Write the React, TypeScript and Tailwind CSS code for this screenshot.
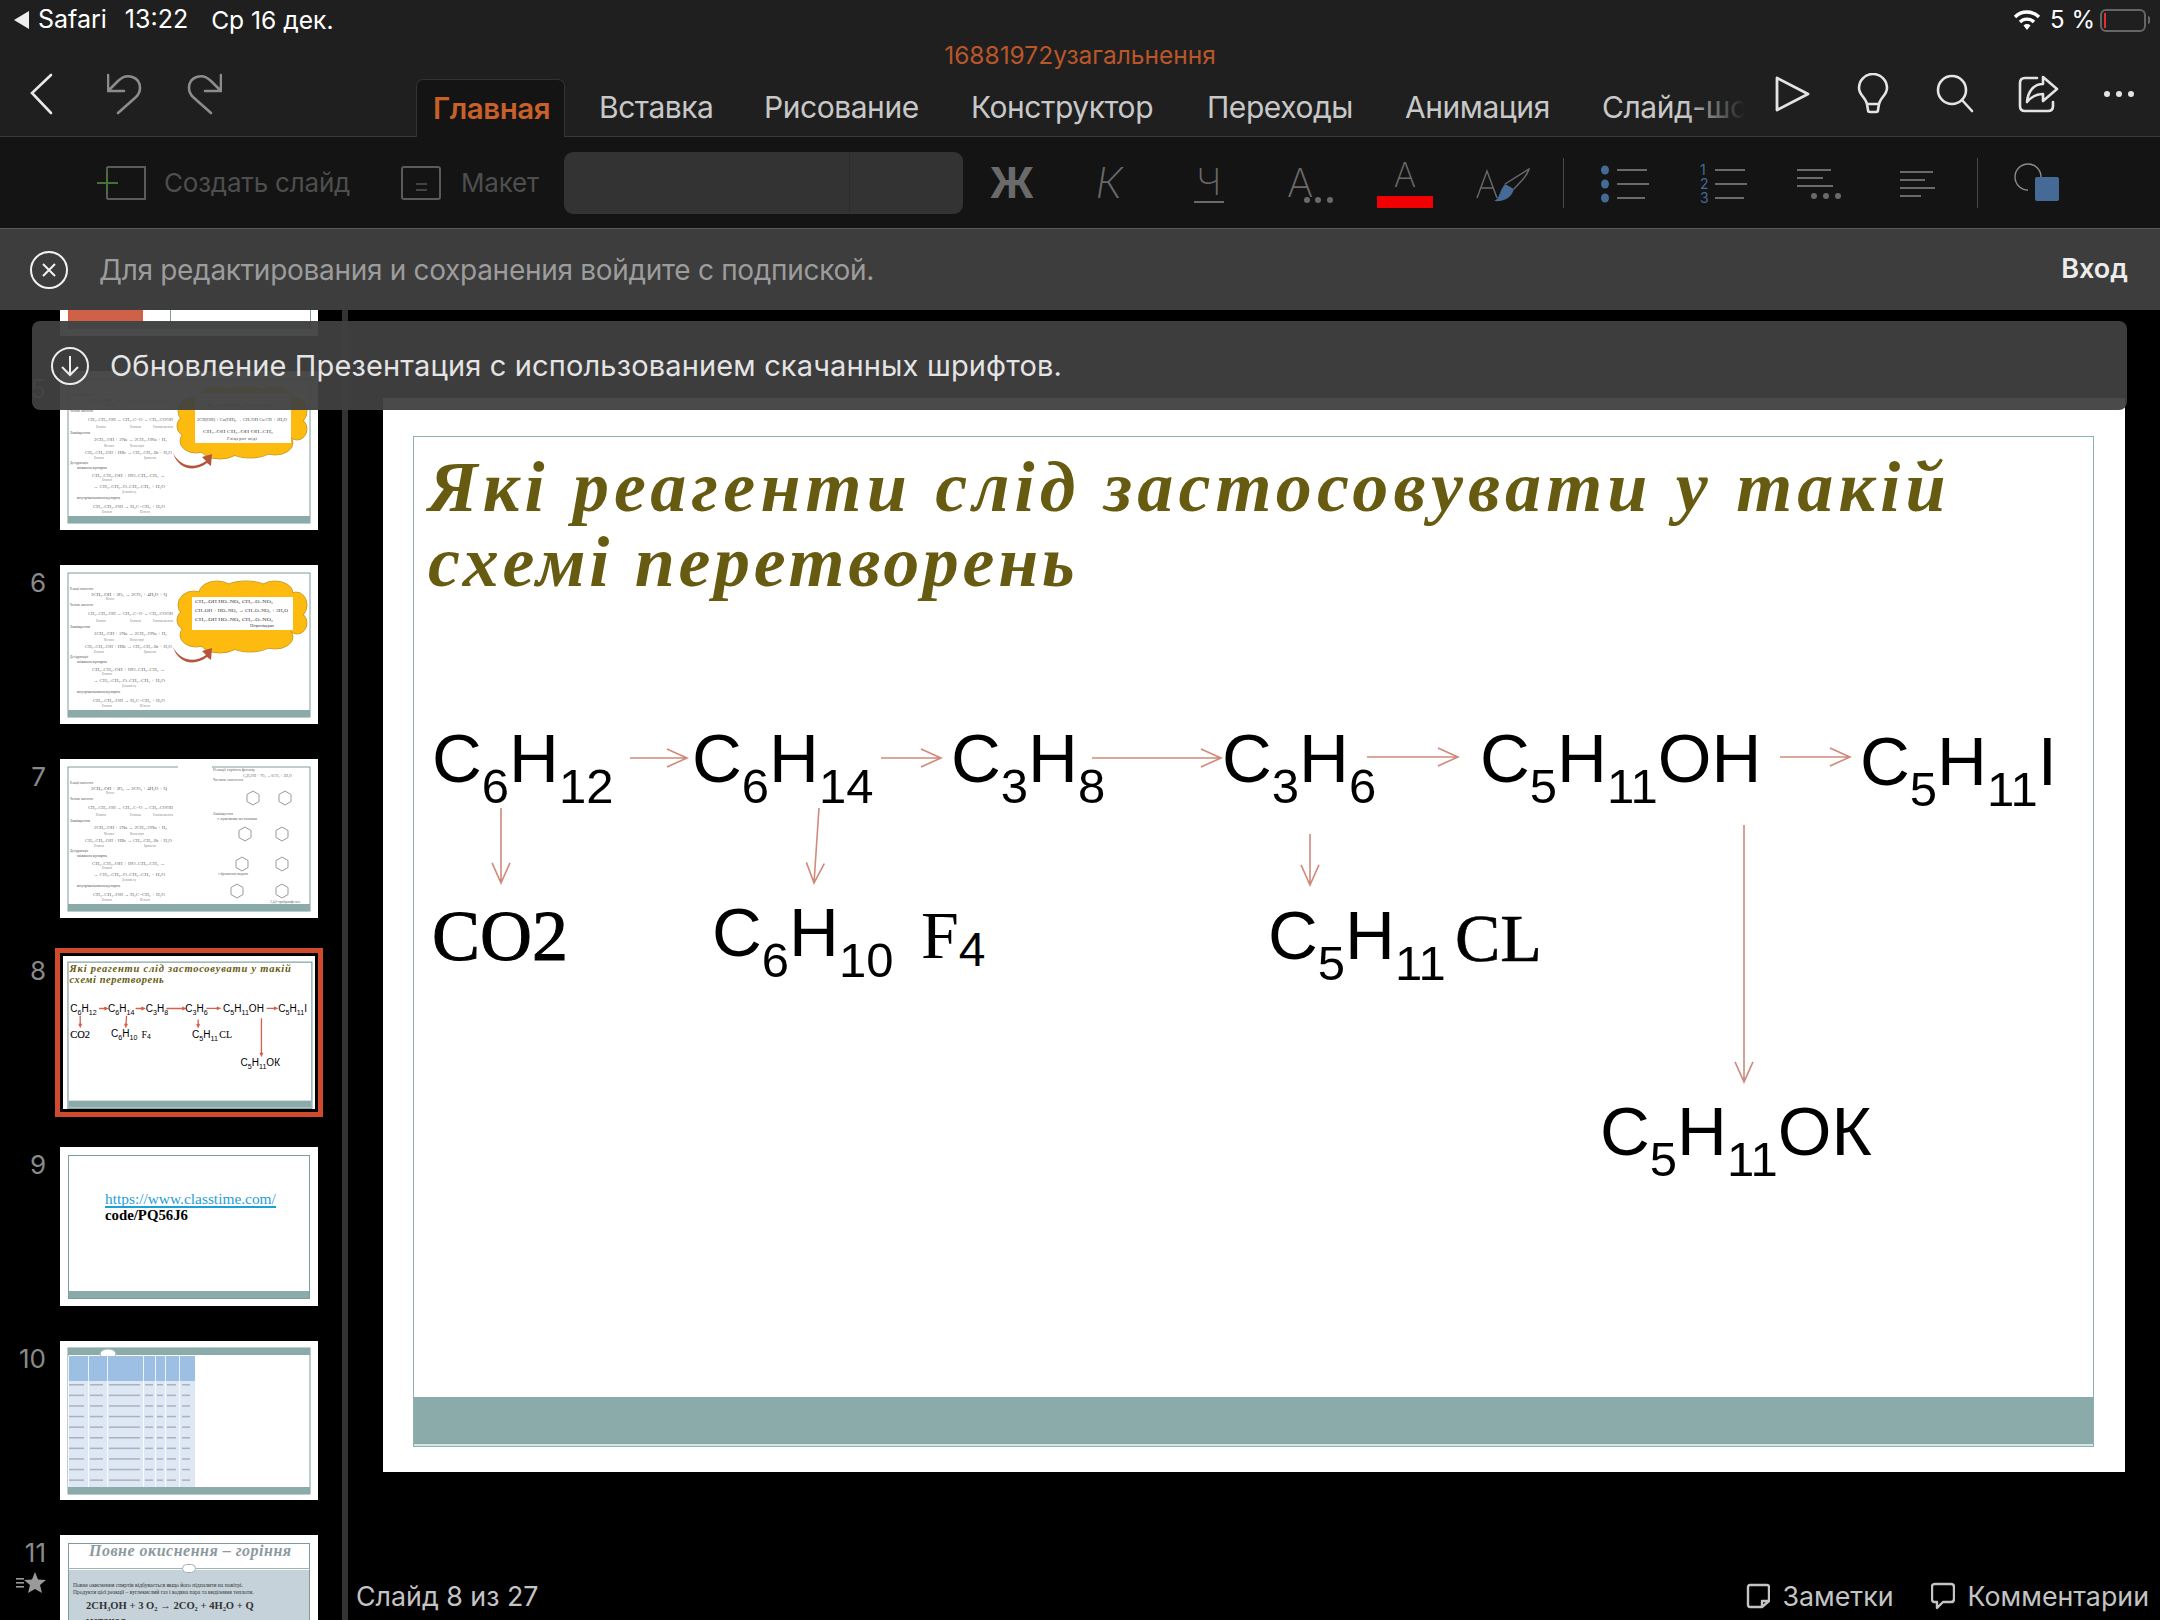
import type { ReactNode } from 'react'

const Sub = ({ children }: { children: ReactNode }) => (
  <span className="relative top-[21px] text-[49px]">{children}</span>
)

const Arrow = ({ x1, y1, x2, y2 }: { x1: number; y1: number; x2: number; y2: number }) => {
  const a = Math.atan2(y2 - y1, x2 - x1)
  const head = (d: number) => `${x2 - 22 * Math.cos(a + d)},${y2 - 22 * Math.sin(a + d)}`
  return <polyline points={`${x1},${y1} ${x2},${y2} ${head(0.42)} ${x2},${y2} ${head(-0.42)}`} />
}

const Slide8 = ({ thumb = false }: { thumb?: boolean }) => (
  <div className="relative h-[1074px] w-[1742px] bg-white text-black [font-family:'Liberation_Sans',sans-serif]">
    <div
      className={
        thumb
          ? 'absolute left-[30px] top-[38px] flex h-[1011px] w-[1681px] flex-col justify-end border-[8px] border-[#7f9c9c]'
          : 'absolute left-[30px] top-[38px] flex h-[1011px] w-[1681px] flex-col justify-end border border-[#8fb0b0]'
      }
    >
      <div className="h-[49px] border-b-2 border-[#d5e4e4] bg-[#8babaa]" />
    </div>

    <div className="absolute left-[45px] top-[52px] w-[1600px] text-[72px] leading-[75px] font-bold italic text-[#665b10] [font-family:'Liberation_Serif',serif]">
      <div className="whitespace-nowrap tracking-[5.2px]">Які реагенти слід застосовувати у такій</div>
      <div className="whitespace-nowrap tracking-[3.7px]">схемі перетворень</div>
    </div>

    <svg
      className={thumb ? 'absolute inset-0 text-[#d9604c]' : 'absolute inset-0 text-[#cf8a7c]'}
      width="1742"
      height="1074"
      viewBox="0 0 1742 1074"
      fill="none"
      stroke="currentColor"
      strokeWidth={thumb ? 9 : 1.6}
    >
      <Arrow x1={247} y1={360} x2={304} y2={360} />
      <Arrow x1={498} y1={360} x2={558} y2={360} />
      <Arrow x1={709} y1={360} x2={838} y2={360} />
      <Arrow x1={984} y1={359} x2={1075} y2={359} />
      <Arrow x1={1397} y1={359} x2={1467} y2={359} />
      <Arrow x1={118} y1={410} x2={118} y2={485} />
      <Arrow x1={436} y1={410} x2={431} y2={485} />
      <Arrow x1={927} y1={436} x2={927} y2={487} />
      <Arrow x1={1361} y1={427} x2={1361} y2={684} />
    </svg>

    <div className="absolute left-[49px] top-[321px] whitespace-nowrap text-[69px] leading-[80px]">C<Sub>6</Sub>H<Sub>12</Sub></div>
    <div className="absolute left-[309px] top-[321px] whitespace-nowrap text-[69px] leading-[80px]">C<Sub>6</Sub>H<Sub>14</Sub></div>
    <div className="absolute left-[568px] top-[321px] whitespace-nowrap text-[69px] leading-[80px]">C<Sub>3</Sub>H<Sub>8</Sub></div>
    <div className="absolute left-[839px] top-[321px] whitespace-nowrap text-[69px] leading-[80px]">C<Sub>3</Sub>H<Sub>6</Sub></div>
    <div className="absolute left-[1097px] top-[321px] whitespace-nowrap text-[69px] leading-[80px]">C<Sub>5</Sub>H<Sub>11</Sub>OH</div>
    <div className="absolute left-[1477px] top-[324px] whitespace-nowrap text-[69px] leading-[80px]">C<Sub>5</Sub>H<Sub>11</Sub>I</div>

    <div className="absolute left-[49px] top-[498px] whitespace-nowrap text-[72px] leading-[80px] [-webkit-text-stroke:1px_#000] [font-family:'Liberation_Serif',serif]">CO2</div>
    <div className="absolute left-[329px] top-[495px] whitespace-nowrap text-[69px] leading-[80px]">C<Sub>6</Sub>H<Sub>10</Sub></div>
    <div className="absolute left-[538px] top-[497px] whitespace-nowrap text-[68px] leading-[80px] [font-family:'Liberation_Serif',serif]">
      F<span className="relative top-[8px] text-[48px] [font-family:'Liberation_Sans',sans-serif]">4</span>
    </div>
    <div className="absolute left-[885px] top-[498px] whitespace-nowrap text-[69px] leading-[80px]">C<Sub>5</Sub>H<Sub>11</Sub></div>
    <div className="absolute left-[1072px] top-[500px] whitespace-nowrap text-[68px] leading-[80px] [-webkit-text-stroke:0.6px_#000] [font-family:'Liberation_Serif',serif]">CL</div>
    <div className="absolute left-[1217px] top-[694px] whitespace-nowrap text-[69px] leading-[80px]">C<Sub>5</Sub>H<Sub>11</Sub>ОК</div>
  </div>
)

// x, y, width, colour, text of the small formula lines on thumbnails 5-7
const formulaRows: [number, number, number, string, string][] = [
  [10, 25, 23, '#555', 'Реакції окиснення'],
  [31, 31, 76, '#555', '2CH₃–OH + 3O₂ → 2CO₂ + 4H₂O + Q'],
  [46, 35, 8, '#888', 'Метанол'],
  [10, 41, 23, '#555', 'Часткове окиснення'],
  [28, 50, 85, '#666', 'CH₃–CH₂–OH → CH₃–C=O → CH₃–COOH'],
  [36, 57, 10, '#888', 'Етанол'],
  [70, 57, 11, '#888', 'Етаналь'],
  [93, 57, 20, '#888', 'Етанова кислота'],
  [10, 63, 20, '#555', 'Заміщення'],
  [34, 70, 73, '#666', '2CH₃–OH + 2Na → 2CH₃–ONa + H₂'],
  [44, 76, 10, '#888', 'Метанол'],
  [70, 76, 14, '#888', 'Метилат натрію'],
  [25, 83, 87, '#666', 'CH₃–CH₂–OH + HBr → CH₃–CH₂–Br + H₂O'],
  [34, 88, 10, '#888', 'Етанол'],
  [84, 88, 12, '#888', 'Бромоетан'],
  [10, 93, 18, '#555', 'Дегідратація'],
  [17, 98, 30, '#555', 'міжмолекулярна'],
  [32, 106, 73, '#666', 'CH₃–CH₂–OH + HO–CH₂–CH₃ →'],
  [42, 110, 10, '#888', 'Етанол'],
  [33, 117, 72, '#666', '→ CH₃–CH₂–O–CH₂–CH₃ + H₂O'],
  [62, 122, 14, '#888', 'Діетиловий етер'],
  [17, 128, 43, '#555', 'внутрішньомолекулярна'],
  [33, 137, 72, '#666', 'CH₃–CH₂–OH → H₂C=CH₂ + H₂O'],
  [42, 142, 10, '#888', 'Етанол'],
  [80, 142, 10, '#888', 'Етен'],
]

const FormulaRows = () => (
  <g fontSize="4" fontFamily="'Liberation Serif', serif">
    <rect x="8" y="8" width="242" height="144" fill="none" stroke="#7f9c9c" strokeWidth="1" />
    <rect x="8" y="145" width="242" height="7" fill="#8babaa" />
    {formulaRows.map(([x, y, w, c, t], i) => (
      <text key={i} x={x} y={y} textLength={w} lengthAdjust="spacingAndGlyphs" fill={c}>
        {t}
      </text>
    ))}
  </g>
)

const bumps = [
  [134, 40, 16, 14], [126, 55, 9, 10], [136, 70, 16, 12], [160, 77, 20, 11], [190, 78, 22, 9],
  [215, 72, 18, 12], [237, 58, 10, 11], [236, 40, 11, 13], [215, 28, 18, 12], [186, 24, 22, 8], [157, 28, 18, 12],
]

const Cloud = () => (
  <g>
    <g fill="#fdbb0f" stroke="#b98a1a" strokeWidth="0.8">
      {bumps.map(([cx, cy, rx, ry], i) => (
        <ellipse key={i} cx={cx} cy={cy} rx={rx} ry={ry} />
      ))}
    </g>
    <g fill="#fdbb0f">
      <ellipse cx="182" cy="52" rx="56" ry="28" />
      {bumps.map(([cx, cy, rx, ry], i) => (
        <ellipse key={i} cx={cx} cy={cy} rx={rx - 0.6} ry={ry - 0.6} />
      ))}
    </g>
    <path d="M113 82 C120 96 135 98 146 90 L142 86 L152 83 L151 95 L147 92 C134 102 118 98 113 82 Z" fill="#b5553c" />
  </g>
)

const Thumb56 = ({ five = false }: { five?: boolean }) => (
  <svg width="258" height="159" viewBox="0 0 258 159">
    <FormulaRows />
    <Cloud />
    {five ? (
      <g fontSize="4.5" fill="#444" fontFamily="'Liberation Serif', serif">
        <rect x="135" y="22" width="96" height="50" fill="#fff" />
        <text x="143" y="36" textLength="70" lengthAdjust="spacingAndGlyphs">CH₂–OH    CH₂–O   O–CH₂</text>
        <text x="137" y="50" textLength="90" lengthAdjust="spacingAndGlyphs">2CH(OH) + Cu(OH)₂ → CH–OH  Cu  CH + 2H₂O</text>
        <text x="143" y="62" textLength="70" lengthAdjust="spacingAndGlyphs">CH₂–OH    CH₂–OH  OH–CH₂</text>
        <text x="167" y="69" textLength="30">Гліцерат міді</text>
      </g>
    ) : (
      <g fontSize="5" fill="#333" fontFamily="'Liberation Serif', serif">
        <rect x="132" y="32" width="101" height="33" fill="#fff" />
        <text x="135" y="38" textLength="78" lengthAdjust="spacingAndGlyphs">CH₂–OH  HO–NO₂  CH₂–O–NO₂</text>
        <text x="135" y="47" textLength="93" lengthAdjust="spacingAndGlyphs">CH–OH + HO–NO₂ → CH–O–NO₂ + 3H₂O</text>
        <text x="135" y="56" textLength="78" lengthAdjust="spacingAndGlyphs">CH₂–OH  HO–NO₂  CH₂–O–NO₂</text>
        <text x="190" y="62" textLength="24" fontSize="4">Нітрогліцерин</text>
      </g>
    )}
  </svg>
)

const ring = [
  [193, 39], [225, 39], [185, 75], [222, 75], [182, 105], [222, 105], [177, 132], [222, 132],
]

const Thumb7 = () => (
  <svg width="258" height="159" viewBox="0 0 258 159">
    <FormulaRows />
    <rect x="118" y="7" width="34" height="2" fill="#fff" />
    <g fontSize="4" fill="#666" fontFamily="'Liberation Serif', serif">
      <text x="153" y="12" textLength="42" lengthAdjust="spacingAndGlyphs">Реакції горіння фенолу</text>
      <text x="183" y="18" textLength="49" lengthAdjust="spacingAndGlyphs">C₆H₅OH + 7O₂ → 6CO₂ + 3H₂O</text>
      <text x="153" y="22" textLength="30" lengthAdjust="spacingAndGlyphs">Часткове окиснення</text>
      <text x="153" y="56" textLength="20" lengthAdjust="spacingAndGlyphs">Заміщення</text>
      <text x="157" y="61" textLength="40" lengthAdjust="spacingAndGlyphs">з лужними металами</text>
      <text x="158" y="116" textLength="30" lengthAdjust="spacingAndGlyphs">з бромною водою</text>
      <text x="210" y="144" textLength="30" lengthAdjust="spacingAndGlyphs">2,4,6-трибромфенол</text>
    </g>
    {ring.map(([x, y], i) => (
      <polygon
        key={i}
        points={`${x},${y - 7} ${x + 6},${y - 3.5} ${x + 6},${y + 3.5} ${x},${y + 7} ${x - 6},${y + 3.5} ${x - 6},${y - 3.5}`}
        fill="none"
        stroke="#999"
        strokeWidth="1"
      />
    ))}
  </svg>
)

const Thumb4 = () => (
  <svg width="258" height="159" viewBox="0 0 258 159">
    <rect x="8" y="110" width="75" height="35" fill="#cf6148" />
    <rect x="110" y="0" width="1" height="152" fill="#7f9c9c" />
    <rect x="250" y="0" width="1" height="152" fill="#7f9c9c" />
    <rect x="8" y="145" width="242" height="7" fill="#8babaa" />
    <rect x="180" y="126" width="50" height="1.5" fill="#aaa" />
  </svg>
)

const Thumb9 = () => (
  <div className="relative h-full w-full [font-family:'Liberation_Serif',serif]">
    <div className="absolute left-[8px] top-[8px] flex h-[144px] w-[242px] flex-col justify-end border border-[#7f9c9c]">
      <div className="h-[7px] bg-[#8babaa]" />
    </div>
    <div className="absolute left-[45px] top-[44px] text-[15.4px] leading-[15px] text-black">
      <div className="w-fit border-b-2 border-[#1da0d8] text-[#1da0d8]">https://www.classtime.com/</div>
      <div className="text-[14.8px] font-bold">code/PQ56J6</div>
    </div>
  </div>
)

const tableCols = [8, 28, 47, 83, 95, 105, 119, 135]
const Thumb10 = () => (
  <svg width="258" height="159" viewBox="0 0 258 159">
    <rect x="8" y="7" width="242" height="146" fill="none" stroke="#7f9c9c" />
    <rect x="8" y="7" width="242" height="7" fill="#8babaa" />
    <rect x="8" y="146" width="242" height="7" fill="#8babaa" />
    <ellipse cx="48" cy="13" rx="8" ry="5" fill="#fff" stroke="#9fb8b8" />
    <rect x="8" y="15" width="127" height="25" fill="#9dbfe3" />
    <rect x="8" y="40" width="127" height="106" fill="#dde8f4" />
    {tableCols.map((x) => (
      <rect key={x} x={x} y="15" width="0.8" height="131" fill="#fff" />
    ))}
    {Array.from({ length: 10 }, (_, i) => (
      <g key={i} fill="#aab2bd">
        <rect x="9" y={43 + i * 10.6} width="15" height="1.5" />
        <rect x="30" y={43 + i * 10.6} width="13" height="1.5" />
        <rect x="49" y={43 + i * 10.6} width="31" height="1.5" />
        <rect x="85" y={43 + i * 10.6} width="8" height="1.5" />
        <rect x="97" y={43 + i * 10.6} width="6" height="1.5" />
        <rect x="107" y={43 + i * 10.6} width="9" height="1.5" />
        <rect x="122" y={43 + i * 10.6} width="8" height="1.5" />
      </g>
    ))}
  </svg>
)

const Thumb11 = () => (
  <div className="relative h-full w-full [font-family:'Liberation_Serif',serif]">
    <div className="absolute left-[8px] top-[8px] h-[144px] w-[242px] border border-[#7f9c9c]" />
    <div className="absolute left-[9px] top-[35px] h-[116px] w-[240px] bg-[#c5d2da]" />
    <div className="absolute left-[8px] top-[33px] h-px w-[242px] bg-[#9fb3b3]" />
    <div className="absolute left-[122px] top-[29px] h-[9px] w-[14px] rounded-full border border-[#9fb3b3] bg-white" />
    <div className="absolute left-[29px] top-[6px] whitespace-nowrap text-[16px] leading-[20px] font-bold italic tracking-[0.5px] text-[#8b9aa0]">
      Повне окиснення – горіння
    </div>
    <div className="absolute left-[13px] top-[47px] whitespace-nowrap text-[5.6px] leading-[6.5px] text-[#333]">
      <div>Повне окиснення спиртів відбувається якщо його підпалити на повітрі.</div>
      <div>Продукти цієї реакції – вуглекислий газ і водяна пара та виділення теплоти.</div>
    </div>
    <div className="absolute left-[26px] top-[63px] whitespace-nowrap text-[10.6px] leading-[15px] font-bold text-[#333]">
      <div>2CH₃OH + 3 O₂ → 2CO₂ + 4H₂O + Q</div>
      <div>метанол</div>
    </div>
  </div>
)

const ThumbRow = ({
  n,
  selected = false,
  star = false,
  children,
}: {
  n?: number
  selected?: boolean
  star?: boolean
  children: ReactNode
}) => (
  <div className="flex gap-[14px]">
    <div className="flex w-[46px] flex-col items-end text-[26px] leading-[36px] text-[#8a8a8a]">
      <span>{n}</span>
      {star && (
        <svg className="mt-[1px]" width="30" height="22" viewBox="0 0 30 22" fill="#999">
          <polygon points="19,0 22,7.5 30,8 24,13 26,21 19,17 12,21 14,13 8,8 16,7.5" />
          <rect x="0" y="6" width="8" height="1.6" />
          <rect x="0" y="10" width="8" height="1.6" />
          <rect x="0" y="14" width="8" height="1.6" />
        </svg>
      )}
    </div>
    <div
      className={
        selected
          ? 'h-[159px] w-[258px] shrink-0 overflow-hidden border-[3px] border-black bg-white outline-[5px] outline-[#cf4b2c]'
          : 'h-[159px] w-[258px] shrink-0 overflow-hidden bg-white'
      }
    >
      {children}
    </div>
  </div>
)

const Tab = ({ className, children }: { className: string; children: ReactNode }) => (
  <div className={`flex h-[58px] shrink-0 items-center ${className}`}>{children}</div>
)

export default function App() {
  return (
    <div className="relative flex h-[1620px] w-[2160px] flex-col overflow-hidden bg-black [font-family:Inter,sans-serif]">
      {/* header */}
      <header className="h-[137px] shrink-0 bg-[#1f1f1f]">
        <div className="flex h-[40px] items-center text-[25px] text-white">
          <svg className="ml-[14px]" width="16" height="18" viewBox="0 0 16 18" fill="#eee">
            <polygon points="15,0 15,18 0,9" />
          </svg>
          <span className="ml-[8px]">Safari</span>
          <span className="ml-[18px]">13:22</span>
          <span className="ml-[23px] text-[24.6px]">Ср 16 дек.</span>
          <div className="ml-auto flex items-center">
            <svg width="28" height="22" viewBox="0 0 28 22" fill="none" stroke="#fff" strokeWidth="3.4">
              <path d="M2 8 A17 17 0 0 1 26 8" />
              <path d="M7 13 A10 10 0 0 1 21 13" />
              <path d="M14 21 L10.5 16.5 A5 5 0 0 1 17.5 16.5 Z" fill="#fff" stroke="none" />
            </svg>
            <span className="ml-[9px] whitespace-nowrap text-[24px]">5 %</span>
            <div className="ml-[5px] flex h-[23px] w-[46px] items-center rounded-[6px] border-2 border-[#666] pl-[2px]">
              <div className="h-[15px] w-[2px] bg-[#e0322c]" />
            </div>
            <div className="ml-[2px] mr-[10px] h-[8px] w-[2px] rounded-r bg-[#666]" />
          </div>
        </div>
        <div className="flex h-[30px] items-center justify-center text-[24.5px] text-[#b9562a]">16881972узагальнення</div>
        <div className="relative flex h-[67px] border-b border-[#3a3a3a]">
          <div className="flex h-[66px] w-[416px] shrink-0 pl-[30px] pt-[3px]">
            <svg width="24" height="42" viewBox="0 0 24 42" fill="none" stroke="#e8e8e8" strokeWidth="2.6" strokeLinecap="round">
              <polyline points="21,2 2,20 21,40" />
            </svg>
            <svg className="ml-[53px]" width="35" height="42" viewBox="0 0 35 42" fill="none" stroke="#8c8c8c" strokeWidth="2.6" strokeLinecap="round">
              <path d="M1 2 V18 H17 M2 17 L11 8 C20 -1 33 4 33 15 C33 20 31 22 29 24 L11 40" />
            </svg>
            <svg className="ml-[45px]" width="35" height="42" viewBox="0 0 35 42" fill="none" stroke="#8c8c8c" strokeWidth="2.6" strokeLinecap="round">
              <path d="M34 2 V18 H18 M33 17 L24 8 C15 -1 2 4 2 15 C2 20 4 22 6 24 L24 40" />
            </svg>
          </div>
          <div className="flex items-end text-[30px] tracking-[-0.45px] text-[#c8c8c8]">
            <Tab className="relative -mb-px w-[149px] rounded-t-[7px] border border-b-0 border-[#333] bg-[#141414] pl-[16px] text-[29.5px] font-semibold text-[#c8602a]">Главная</Tab>
            <Tab className="ml-[34px] w-[165px]">Вставка</Tab>
            <Tab className="w-[207px]">Рисование</Tab>
            <Tab className="w-[236px]">Конструктор</Tab>
            <Tab className="w-[198px]">Переходы</Tab>
            <Tab className="w-[197px]">Анимация</Tab>
            <Tab className="relative w-[143px] overflow-hidden whitespace-nowrap">
              Слайд-шоу
              <span className="absolute inset-y-0 right-0 w-[60px] bg-gradient-to-r from-transparent to-[#1f1f1f]" />
            </Tab>
          </div>
          <div className="ml-[30px] flex pt-[3px]">
            <svg width="36" height="42" viewBox="0 0 36 42" fill="none" stroke="#e4e4e4" strokeWidth="2.8" strokeLinejoin="round">
              <polygon points="2,5 33,21 2,37" />
            </svg>
            <svg className="ml-[46px]" width="32" height="42" viewBox="0 0 32 42" fill="none" stroke="#e4e4e4" strokeWidth="2.6" strokeLinejoin="round">
              <path d="M10 31 C9 25 2 22 2 15 A14 14 0 0 1 30 15 C30 22 23 25 22 31 Z" />
              <path d="M10 31 L11 37 Q11 39 13 39 H19 Q21 39 21 37 L22 31" />
            </svg>
            <svg className="ml-[46px]" width="40" height="42" viewBox="0 0 40 42" fill="none" stroke="#e4e4e4" strokeWidth="2.6" strokeLinecap="round">
              <circle cx="17" cy="17" r="14" />
              <line x1="27" y1="27" x2="37" y2="38" />
            </svg>
            <svg className="ml-[43px]" width="41" height="42" viewBox="0 0 41 42" fill="none" stroke="#e4e4e4" strokeWidth="2.6" strokeLinejoin="round" strokeLinecap="round">
              <path d="M19 5 H7 Q2 5 2 10 V33 Q2 38 7 38 H30 Q35 38 35 33 V29" />
              <path d="M25 4 L39 16 L25 28 V21 C18 21 13 24 9 29 C10 18 16 11 25 11 Z" />
            </svg>
            <svg className="ml-[43px]" width="34" height="42" viewBox="0 0 34 42" fill="#e4e4e4">
              <circle cx="5" cy="21" r="3" />
              <circle cx="17" cy="21" r="3" />
              <circle cx="29" cy="21" r="3" />
            </svg>
          </div>
        </div>
      </header>

      {/* ribbon */}
      <div className="flex h-[92px] shrink-0 items-center border-b border-[#5a5a5a] bg-[#141414] text-[#4e4e4e]">
        <svg className="ml-[97px] shrink-0" width="49" height="34" viewBox="0 0 49 34" fill="none" stroke="#5a5a5a" strokeWidth="2">
          <path d="M10 1 H48 V33 H10 M10 1 V6 M10 28 V33" />
          <path d="M10 6 V28 M0 17 H21" stroke="#47713a" />
        </svg>
        <span className="ml-[18px] w-[187px] shrink-0 whitespace-nowrap text-[26px] tracking-[-0.2px]">Создать слайд</span>
        <svg className="ml-[50px] shrink-0" width="40" height="34" viewBox="0 0 40 34" fill="none" stroke="#5a5a5a" strokeWidth="2">
          <rect x="1" y="1" width="38" height="32" rx="2" />
          <path d="M15 18 H26 M15 24 H26" stroke="#444" />
        </svg>
        <span className="ml-[20px] w-[77px] shrink-0 text-[26px] tracking-[-0.2px]">Макет</span>
        <div className="ml-[26px] flex h-[62px] w-[399px] shrink-0 rounded-[9px] bg-[#333]">
          <div className="w-[286px] border-r border-[#2c2c2c]" />
        </div>
        <div className="ml-[17px] w-[64px] shrink-0 text-center text-[42px] leading-none font-bold text-[#6a6a6a]">Ж</div>
        <div className="ml-[33px] w-[64px] shrink-0 text-center text-[42px] leading-none font-extralight italic text-[#6a6a6a]">К</div>
        <div className="ml-[36px] flex w-[64px] shrink-0 justify-center">
          <span className="border-b-2 border-[#6a6a6a] px-[3px] text-[36px] leading-[38px] font-extralight text-[#6a6a6a]">Ч</span>
        </div>
        <div className="ml-[37px] flex w-[64px] shrink-0 items-end text-[40px] leading-none font-extralight text-[#6a6a6a]">
          <span className="ml-[9px]">А</span>
          <svg className="-ml-[10px] -mb-[1px]" width="30" height="8" viewBox="0 0 30 8" fill="#6a6a6a">
            <circle cx="4" cy="4" r="3" />
            <circle cx="15" cy="4" r="3" />
            <circle cx="27" cy="4" r="3" />
          </svg>
        </div>
        <div className="ml-[35px] flex w-[56px] shrink-0 flex-col items-center">
          <span className="text-[34px] leading-[36px] font-extralight text-[#6a6a6a]">А</span>
          <div className="mt-[3px] h-[12px] w-[56px] bg-[#f00000]" />
        </div>
        <svg className="ml-[42px] shrink-0" width="60" height="40" viewBox="0 0 60 40" fill="none" stroke="#6a6a6a" strokeWidth="1.4">
          <path d="M2 35 L12 8 L22 35 M6 25 H18" />
          <path d="M30 21 L54 6 C52 14 44 20 39 26" />
          <path d="M19 38 C25 36 24 28 30 21 L39 26 C37 34 30 39 19 38 Z" fill="#466a96" stroke="none" />
        </svg>
        <div className="ml-[28px] h-[50px] w-px shrink-0 bg-[#4a4a4a]" />
        <svg className="ml-[36px] shrink-0" width="52" height="50" viewBox="0 0 52 50" fill="none" stroke="#6a6a6a" strokeWidth="2">
          <path d="M17 12 H47 M17 26 H49 M17 40 H45" />
          <g fill="#466a96" stroke="none">
            <ellipse cx="5" cy="12" rx="4" ry="4.5" />
            <ellipse cx="5" cy="26" rx="4" ry="4.5" />
            <ellipse cx="5" cy="40" rx="4" ry="4.5" />
          </g>
        </svg>
        <svg className="ml-[48px] shrink-0" width="50" height="50" viewBox="0 0 50 50" fill="none" stroke="#6a6a6a" strokeWidth="2">
          <path d="M15 12 H45 M15 26 H47 M15 40 H44" />
          <g fill="#466a96" stroke="none" fontSize="14" fontFamily="Inter, sans-serif">
            <text x="0" y="17">1</text>
            <text x="0" y="31">2</text>
            <text x="0" y="45">3</text>
          </g>
        </svg>
        <svg className="ml-[46px] shrink-0" width="46" height="50" viewBox="0 0 46 50" fill="none" stroke="#6a6a6a" strokeWidth="2">
          <path d="M1 12 H35 M1 20 H27 M1 28 H37" />
          <g fill="#6a6a6a" stroke="none">
            <circle cx="18" cy="38" r="3" />
            <circle cx="30" cy="38" r="3" />
            <circle cx="42" cy="38" r="3" />
          </g>
        </svg>
        <svg className="ml-[56px] shrink-0" width="40" height="50" viewBox="0 0 40 50" fill="none" stroke="#6a6a6a" strokeWidth="2">
          <path d="M2 14 H35 M2 22 H27 M2 30 H37 M2 38 H23" />
        </svg>
        <div className="ml-[39px] h-[50px] w-px shrink-0 bg-[#4a4a4a]" />
        <svg className="ml-[36px] shrink-0" width="48" height="40" viewBox="0 0 48 40" fill="none" stroke="#8a8a8a" strokeWidth="1.4">
          <path d="M14 27 A13 13 0 1 1 27 14" />
          <rect x="21" y="14" width="24" height="24" rx="2" fill="#466a96" stroke="none" />
        </svg>
      </div>

      {/* subscription banner */}
      <div className="flex h-[81px] shrink-0 items-center bg-[#3d3d3d] pl-[30px] pr-[32px]">
        <svg width="38" height="38" viewBox="0 0 38 38" fill="none" stroke="#f2f2f2" strokeWidth="2">
          <circle cx="19" cy="19" r="18" />
          <path d="M13 13 L25 25 M25 13 L13 25" />
        </svg>
        <span className="ml-[31px] text-[28px] tracking-[-0.3px] text-[#9c9c9c]">Для редактирования и сохранения войдите с подпиской.</span>
        <span className="ml-auto text-[27px] font-semibold text-[#ececec]">Вход</span>
      </div>

      {/* body */}
      <div className="flex min-h-0 flex-1">
        <aside className="w-[342px] shrink-0 overflow-hidden">
          <div className="-mt-[133px] flex flex-col gap-[35px]">
            <ThumbRow><Thumb4 /></ThumbRow>
            <ThumbRow n={5}><Thumb56 five /></ThumbRow>
            <ThumbRow n={6}><Thumb56 /></ThumbRow>
            <ThumbRow n={7}><Thumb7 /></ThumbRow>
            <ThumbRow n={8} selected>
              <div className="origin-top-left scale-[0.1458]"><Slide8 thumb /></div>
            </ThumbRow>
            <ThumbRow n={9}><Thumb9 /></ThumbRow>
            <ThumbRow n={10}><Thumb10 /></ThumbRow>
            <ThumbRow n={11} star><Thumb11 /></ThumbRow>
          </div>
        </aside>
        <div className="w-[6px] shrink-0 bg-[#333]" />
        <main className="flex min-w-0 flex-1 flex-col">
          <div className="ml-[35px] mt-[88px]">
            <Slide8 />
          </div>
          <footer className="mt-auto flex h-[48px] items-center pl-[8px] pr-[11px] text-[26.8px] text-[#c4c4c4]">
            <span>Слайд 8 из 27</span>
            <svg className="ml-auto" width="24" height="26" viewBox="0 0 24 26" fill="none" stroke="#c4c4c4" strokeWidth="2.4" strokeLinejoin="round">
              <path d="M4 2 H21 Q23 2 23 4 V18 L16 24 H4 Q2 24 2 22 V4 Q2 2 4 2 Z M16 24 V18 H23" />
            </svg>
            <span className="ml-[12px]">Заметки</span>
            <svg className="ml-[37px]" width="24" height="28" viewBox="0 0 24 28" fill="none" stroke="#c4c4c4" strokeWidth="2.4" strokeLinejoin="round">
              <path d="M4 2 H20 Q23 2 23 5 V17 Q23 20 20 20 H12 L6 26 V20 H4 Q1 20 1 17 V5 Q1 2 4 2 Z" />
            </svg>
            <span className="ml-[13px]">Комментарии</span>
          </footer>
        </main>
      </div>

      {/* toast over the slide */}
      <div className="absolute left-[32px] top-[321px] flex h-[89px] w-[2095px] items-center rounded-[8px] bg-[#404040]/95 pl-[19px]">
        <svg width="38" height="38" viewBox="0 0 38 38" fill="none" stroke="#ededed" strokeWidth="2">
          <circle cx="19" cy="19" r="18" />
          <path d="M19 9 V28 M11 20 L19 28 L27 20" />
        </svg>
        <span className="ml-[21px] text-[29px] tracking-[0.15px] text-[#e4e4e4]">Обновление Презентация с использованием скачанных шрифтов.</span>
      </div>
    </div>
  )
}
